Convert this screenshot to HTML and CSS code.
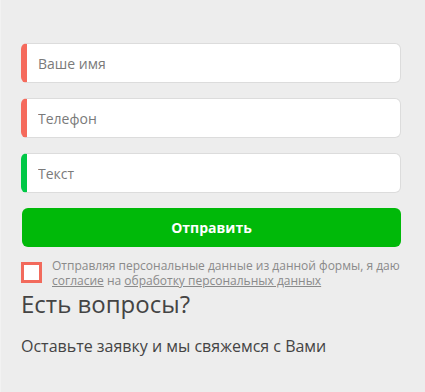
FILE: index.html
```html
<!doctype html>
<html>
<head>
    <meta charset='utf-8'>
    <title>Обратная связь</title>
    <link rel="stylesheet" href="styles.css">
</head>
<body>
<div class='main'>
    <form class='form'>
        <input class='field field-req' type='text' placeholder='Ваше имя'>
        <input class='field field-req' type='text' placeholder='Телефон'>
        <input class='field field-ok' type='text' placeholder='Текст'>
        <button class='send' type='button'>Отправить</button>
        <label class='agree'>
            <span class='box'></span>
            <span class='agreetxt'>Отправляя персональные данные из данной формы, я даю <a href='#'>согласие</a> на <a href='#'>обработку персональных данных</a></span>
        </label>
    </form>
    <h2 class='title'>Есть вопросы?</h2>
    <p class='sub'>Оставьте заявку и мы свяжемся с Вами</p>
</div>
</body>
</html>
```

FILE: styles.css
```css
*{margin:0;padding:0;box-sizing:border-box;}
html,body{background:#ededed;}
body{font-family:"Open Sans","Noto Sans",sans-serif;color:#444;border-left:1px solid #f2f2f2;min-height:392px;}
.main{padding:43px 0 0 20px;width:401px;}

.form{display:flex;flex-direction:column;}
.field{display:block;width:380px;height:40px;margin-bottom:15px;padding:0 0 0 11px;border:1px solid #dcdcdc;border-left:6px solid #f56a5c;border-radius:6px;background:#fff;font:14px "Open Sans",sans-serif;color:#555;outline:none;}
.field::placeholder{color:#7a7a7a;}
.field-ok{border-left-color:#00c846;}

.send{display:block;width:379px;height:39px;margin-left:1px;border:0;border-radius:6px;background:#00b909;color:#fff;font:bold 14px "Open Sans",sans-serif;cursor:pointer;}

.agree{display:flex;margin-top:15px;}
.box{flex:none;width:21px;height:21px;border:3px solid #f26a5c;background:#fff;margin-right:10px;}
.agreetxt{font-size:12px;line-height:15px;color:#8a8a8a;margin-top:-4px;}
.agreetxt a{color:#8a8a8a;}

.title{font-weight:normal;font-size:24px;line-height:30px;color:#444;margin-top:1px;}
.sub{font-size:16px;line-height:22px;color:#444;margin-top:16px;}
```
